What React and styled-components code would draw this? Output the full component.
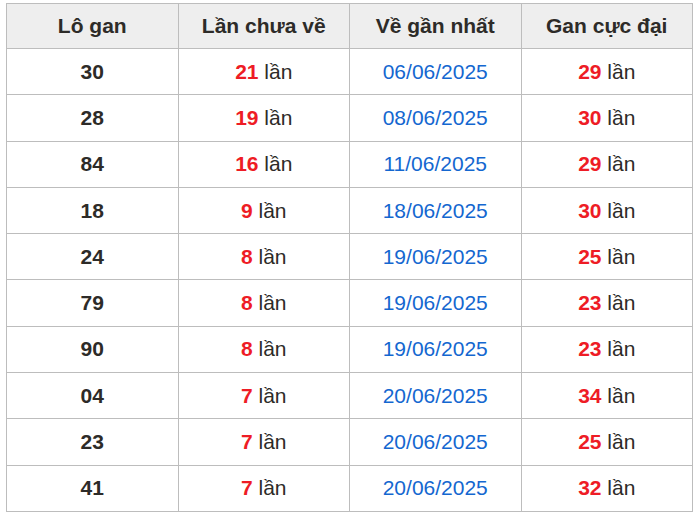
import React from 'react';
import styled, { createGlobalStyle } from 'styled-components';

const GlobalStyle = createGlobalStyle`
    body {
        margin: 0;
        background: #fff;
        font-family: "Liberation Sans", Arial, sans-serif;
    }
`;

const Wrapper = styled.div`
    padding: 3px 7px 0 6px;
`;

const Table = styled.table`
    width: 100%;
    border-collapse: collapse;
    table-layout: fixed;
    border: 1px solid #bdbdbd;
    color: #2d2b28;
    font-size: 21px;
`;

const HeadCell = styled.th`
    height: 44px;
    padding: 0;
    background: #eeeeee;
    border: 1px solid #bdbdbd;
    font-weight: bold;
    text-align: center;
`;

const Cell = styled.td`
    height: 45.3px;
    padding: 0;
    border: 1px solid #bdbdbd;
    text-align: center;
    font-weight: ${(props) => (props.bold ? 'bold' : 'normal')};
    color: ${(props) => (props.blue ? '#1467d0' : 'inherit')};
`;

const Count = styled.b`
    color: #ee1c25;
`;

const rows = [
    ['30', 21, '06/06/2025', 29],
    ['28', 19, '08/06/2025', 30],
    ['84', 16, '11/06/2025', 29],
    ['18', 9, '18/06/2025', 30],
    ['24', 8, '19/06/2025', 25],
    ['79', 8, '19/06/2025', 23],
    ['90', 8, '19/06/2025', 23],
    ['04', 7, '20/06/2025', 34],
    ['23', 7, '20/06/2025', 25],
    ['41', 7, '20/06/2025', 32]
];

const Times = ({ n }) => (
    <>
        <Count>{n}</Count> lần
    </>
);

const App = () => (
    <Wrapper>
        <GlobalStyle />
        <Table>
            <thead>
                <tr>
                    <HeadCell>Lô gan</HeadCell>
                    <HeadCell>Lần chưa về</HeadCell>
                    <HeadCell>Về gần nhất</HeadCell>
                    <HeadCell>Gan cực đại</HeadCell>
                </tr>
            </thead>
            <tbody>
                {rows.map(([num, miss, date, max]) => (
                    <tr key={num}>
                        <Cell bold>{num}</Cell>
                        <Cell><Times n={miss} /></Cell>
                        <Cell blue>{date}</Cell>
                        <Cell><Times n={max} /></Cell>
                    </tr>
                ))}
            </tbody>
        </Table>
    </Wrapper>
);

export default App;
